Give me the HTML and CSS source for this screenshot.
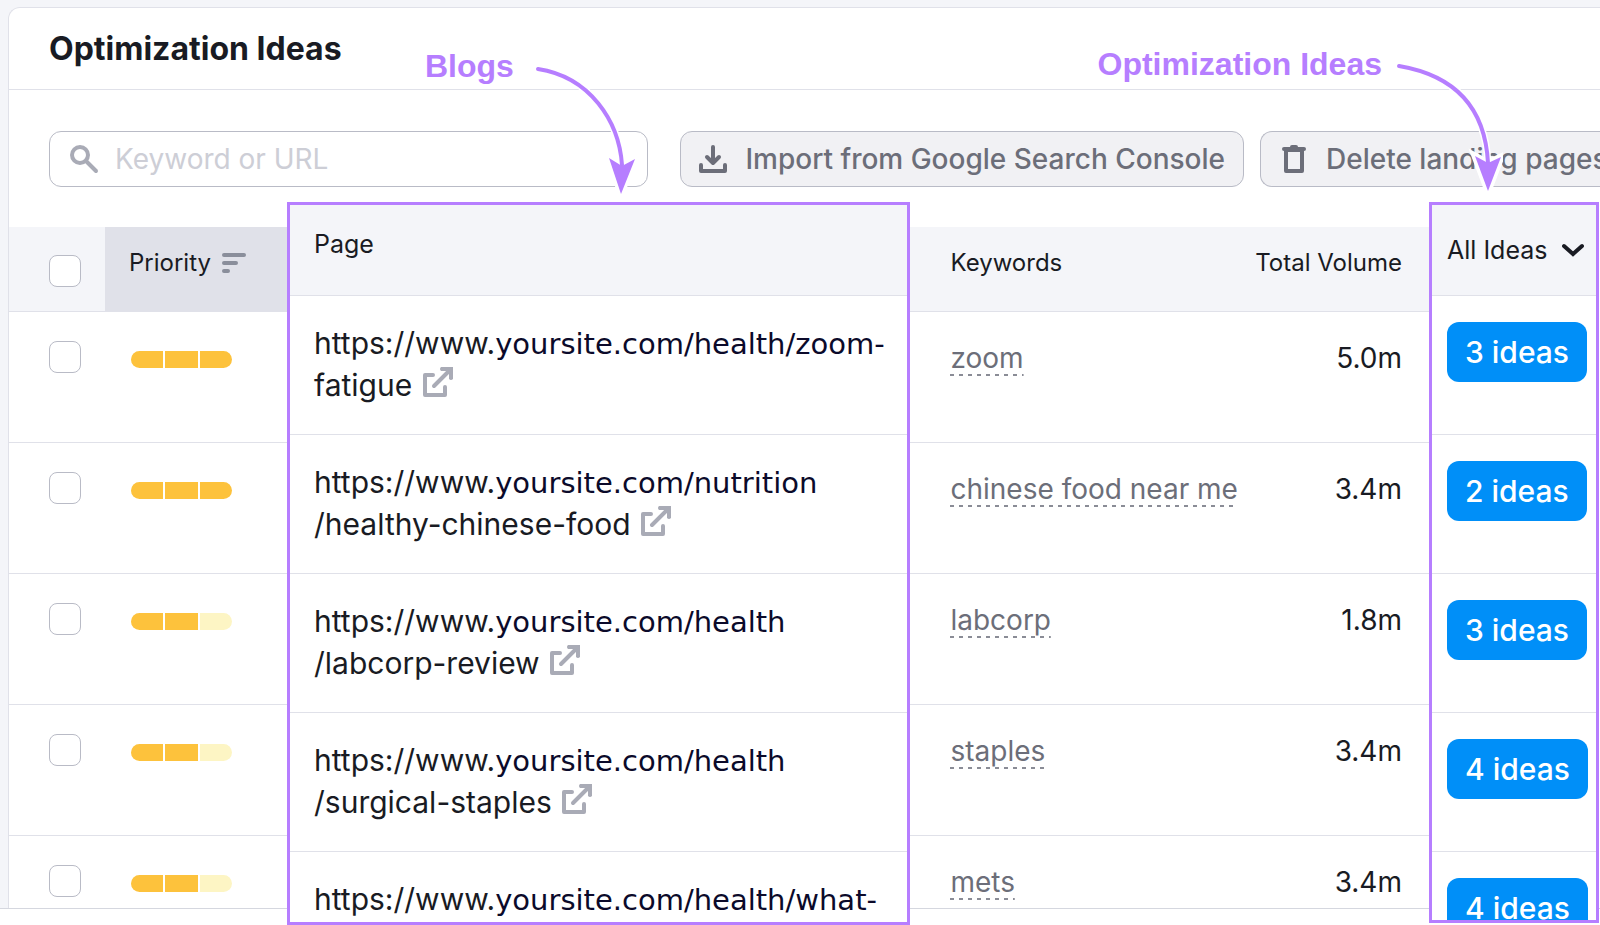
FILE: index.html
```
<!DOCTYPE html>
<html lang="en">
<head>
    <meta charset="utf-8">
    <title>Optimization Ideas</title>
    <link rel="stylesheet" href="styles.css">
</head>
<body>
<svg class="defs" width="0" height="0" aria-hidden="true">
    <symbol id="external" viewBox="0 0 30 30">
        <path d="M10 8H2v20h20v-8M11 19L27 3" fill="none" stroke="currentColor" stroke-width="4" stroke-linecap="round" stroke-linejoin="round"/>
        <path d="M18 0h12v12q-1 1-2 1t-2-1V4h-8q-1-1-1-2t1-2z" fill="currentColor"/>
    </symbol>
</svg>
<div class="backdrop">
    <main class="card">
        <header class="card-head">
            <h1>Optimization Ideas</h1>
        </header>
        <div class="toolbar">
            <label class="search">
                <svg width="30" height="30" viewBox="0 0 30 30" fill="none" stroke="currentColor" stroke-width="4" stroke-linecap="round">
                    <circle cx="11" cy="11" r="8"/>
                    <path d="M17 17l10 10"/>
                </svg>
                <input type="text" placeholder="Keyword or URL" aria-label="Keyword or URL">
            </label>
            <button class="btn" type="button">
                <svg width="28" height="28" viewBox="0 0 28 28" fill="none" stroke="currentColor" stroke-width="4" stroke-linecap="round" stroke-linejoin="round">
                    <path d="M14 2v14M8 12l6 6 6-6M2 20v6h24v-6"/>
                </svg>
                Import from Google Search Console
            </button>
            <button class="btn btn-delete" type="button">
                <svg width="24" height="28" viewBox="0 0 24 28" fill="none" stroke="currentColor" stroke-width="4" stroke-linejoin="round">
                    <path d="M4 5h16v21H4z"/>
                    <path d="M2 4h20" stroke-linecap="round"/>
                    <path d="M10 2h4" stroke-linecap="round"/>
                </svg>
                Delete landing pages
            </button>
        </div>
        <div class="board">
            <div class="pane">
                <table class="grid">
                    <thead>
                    <tr>
                        <th class="col-check"><input type="checkbox" aria-label="Select all"></th>
                        <th class="col-priority">Priority
                            <svg width="24" height="20" viewBox="0 0 24 20" stroke="currentColor" stroke-width="4" stroke-linecap="round">
                                <path d="M2 2h20M2 10h12M2 18h4"/>
                            </svg>
                        </th>
                    </tr>
                    </thead>
                    <tbody>
                    <tr><td class="col-check"><input type="checkbox" aria-label="Select zoom"></td><td><div class="bars"><i></i><i></i><i></i></div></td></tr>
                    <tr><td class="col-check"><input type="checkbox" aria-label="Select chinese food near me"></td><td><div class="bars"><i></i><i></i><i></i></div></td></tr>
                    <tr><td class="col-check"><input type="checkbox" aria-label="Select labcorp"></td><td><div class="bars"><i></i><i></i><i class="off"></i></div></td></tr>
                    <tr><td class="col-check"><input type="checkbox" aria-label="Select staples"></td><td><div class="bars"><i></i><i></i><i class="off"></i></div></td></tr>
                    <tr><td class="col-check"><input type="checkbox" aria-label="Select mets"></td><td><div class="bars"><i></i><i></i><i class="off"></i></div></td></tr>
                    </tbody>
                </table>
            </div>
            <div class="panel">
                <table class="grid pages">
                    <thead>
                    <tr><th>Page</th></tr>
                    </thead>
                    <tbody>
                    <tr><td>https://www.<span class="site">yoursite.com/health/zoom-</span><br>fatigue <a href="#" aria-label="Open page"><svg><use href="#external"/></svg></a></td></tr>
                    <tr><td>https://www.<span class="site">yoursite.com/nutrition</span><br>/healthy-chinese-food <a href="#" aria-label="Open page"><svg><use href="#external"/></svg></a></td></tr>
                    <tr><td>https://www.<span class="site">yoursite.com/health</span><br>/labcorp-review <a href="#" aria-label="Open page"><svg><use href="#external"/></svg></a></td></tr>
                    <tr><td>https://www.<span class="site">yoursite.com/health</span><br>/surgical-staples <a href="#" aria-label="Open page"><svg><use href="#external"/></svg></a></td></tr>
                    <tr><td>https://www.<span class="site">yoursite.com/health/what-</span></td></tr>
                    </tbody>
                </table>
            </div>
            <div class="pane">
                <table class="grid metrics">
                    <thead>
                    <tr><th>Keywords</th><th class="num">Total Volume</th></tr>
                    </thead>
                    <tbody>
                    <tr><td><a href="#">zoom</a></td><td class="num">5.0m</td></tr>
                    <tr><td><a href="#">chinese food near me</a></td><td class="num">3.4m</td></tr>
                    <tr><td><a href="#">labcorp</a></td><td class="num">1.8m</td></tr>
                    <tr><td><a href="#">staples</a></td><td class="num">3.4m</td></tr>
                    <tr><td><a href="#">mets</a></td><td class="num">3.4m</td></tr>
                    </tbody>
                </table>
            </div>
            <div class="panel panel-ideas">
                <table class="grid ideas">
                    <thead>
                    <tr>
                        <th>
                            <button class="filter" type="button">All Ideas
                                <svg width="22" height="14" viewBox="0 0 22 14" fill="none" stroke="currentColor" stroke-width="4" stroke-linecap="round">
                                    <path d="M2 3l9 8 9-8"/>
                                </svg>
                            </button>
                        </th>
                    </tr>
                    </thead>
                    <tbody>
                    <tr><td><button class="idea" type="button">3 ideas</button></td></tr>
                    <tr><td><button class="idea" type="button">2 ideas</button></td></tr>
                    <tr><td><button class="idea" type="button">3 ideas</button></td></tr>
                    <tr><td><button class="idea" type="button">4 ideas</button></td></tr>
                    <tr><td><button class="idea" type="button">4 ideas</button></td></tr>
                    </tbody>
                </table>
            </div>
        </div>
    </main>
</div>

<div class="note note-blogs">
    <span>Blogs</span>
    <svg width="110" height="140" viewBox="0 0 110 140">
        <path class="halo" d="M12 10C64 18 93 62 96 106M83 99l12 35 14-35-13 7z"/>
        <path class="curve" d="M12 10C64 18 93 62 96 106"/>
        <path class="head" d="M83 99l12 36 14-35-13 7z"/>
    </svg>
</div>
<div class="note note-ideas">
    <span>Optimization Ideas</span>
    <svg width="116" height="140" viewBox="0 0 116 140">
        <path class="halo" d="M12 9C65 18 98 48 101 106M88 99l13 35 13-34-13 6z"/>
        <path class="curve" d="M12 9C65 18 98 48 101 106"/>
        <path class="head" d="M88 99l13 35 13-34-13 6z"/>
    </svg>
</div>
</body>
</html>
```
FILE: styles.css
```
* {
    box-sizing: border-box;
}

body {
    position: relative;
    display: flex;
    flex-direction: column;
    height: 100vh;
    margin: 0;
    overflow: hidden;
    background: #fff;
    color: #191b23;
    font-family: Inter, "Liberation Sans", sans-serif;
    font-size: 28px;
}

button, input {
    font: inherit;
    color: inherit;
}

.defs {
    position: absolute;
}

.backdrop {
    flex: 1;
    min-height: 0;
    display: flex;
    margin-bottom: 16px;
    padding: 7px 0 0 8px;
    background: #f4f5f9;
    border-bottom: 1px solid #d5d7df;
}

.card {
    flex: 1;
    min-width: 0;
    display: flex;
    flex-direction: column;
    background: #fff;
    border: 1px solid #e0e1e9;
    border-width: 1px 0 0 1px;
    border-radius: 12px 0 0 0;
}

.card-head {
    padding: 20px 40px;
    border-bottom: 1px solid #e0e1e9;
}

h1 {
    margin: 0;
    font-size: 32px;
    line-height: 41px;
    font-weight: 700;
}

.toolbar {
    display: flex;
    gap: 16px;
    padding: 41px 0 40px 40px;
    overflow: hidden;
}

.search {
    flex: 1;
    display: flex;
    align-items: center;
    gap: 16px;
    height: 56px;
    margin-right: 16px;
    padding: 0 19px;
    border: 1px solid #b9bbc6;
    border-radius: 12px;
    color: #a9abb6;
}

.search input {
    flex: 1;
    min-width: 0;
    padding: 0;
    border: 0;
    outline: 0;
    background: none;
    color: #191b23;
}

.search input::placeholder {
    color: #cdced6;
    opacity: 1;
}

.btn {
    flex: none;
    display: flex;
    align-items: center;
    gap: 18px;
    height: 56px;
    padding: 0 18px;
    border: 1px solid #b9bbc6;
    border-radius: 12px;
    background: #f1f1f4;
    color: #6c6e79;
    font-weight: 500;
    white-space: nowrap;
}

.btn svg {
    flex: none;
}

/* runs off the right side of the card */
.btn-delete {
    justify-content: flex-start;
    gap: 20px;
    width: 341px;
    margin-right: -1px;
    padding: 0 0 0 21px;
    border-right: 0;
    border-radius: 12px 0 0 12px;
}

.board {
    flex: 1;
    min-height: 0;
    display: grid;
    grid-template-columns: 278px 624fr 519fr 170px;
    grid-template-rows: minmax(0, 1fr);
    padding-right: 1px;
}

.pane {
    overflow: hidden;
}

.panel {
    margin: -25px 0 -17px;
    border: 3px solid #b67eff;
    background: #fff;
    overflow: hidden;
}

.panel-ideas {
    margin-bottom: -15px;
}

.grid {
    width: 100%;
    border-collapse: separate;
    border-spacing: 0;
}

.grid th {
    height: 85px;
    padding: 20px 0 0;
    background: #f4f5f9;
    border-bottom: 1px solid #e0e1e9;
    font-size: 24px;
    line-height: 32px;
    font-weight: 400;
    text-align: left;
    vertical-align: top;
}

.grid td {
    height: 131px;
    padding: 28px 0 0;
    border-bottom: 1px solid #e0e1e9;
    line-height: 36px;
    vertical-align: top;
}

.grid .col-check {
    width: 96px;
    padding-top: 29px;
    padding-left: 40px;
}

.grid th.col-check {
    padding-top: 28px;
}

.grid .col-priority {
    padding-left: 24px;
    background: #e0e1e9;
}

.col-priority svg {
    margin-left: 4px;
    color: #8a8e9b;
    vertical-align: -2px;
}

input[type="checkbox"] {
    appearance: none;
    display: block;
    width: 32px;
    height: 32px;
    margin: 0;
    border: 1px solid #b9bbc6;
    border-radius: 8px;
    background: #fff;
}

.bars {
    display: flex;
    gap: 2px;
    width: 101px;
    margin: 11px 0 0 26px;
    border-radius: 9px;
    overflow: hidden;
}

.bars i {
    flex: 1;
    height: 17px;
    background: #fdc23c;
}

.bars .off {
    background: #fdf5c4;
}

.panel th {
    height: 91px;
    padding: 23px 24px 0;
    font-size: 25px;
}

.panel td {
    height: 139px;
    padding: 26px 0 0 24px;
    font-size: 30px;
}

.grid.pages td {
    line-height: 42px;
    white-space: nowrap;
}

.site {
    font-family: "DejaVu Sans", sans-serif;
    font-size: 29px;
    line-height: 1;
    color: #0b0a2a;
}

.pages a {
    margin-left: 2px;
    color: #a9abb6;
}

.pages svg {
    width: 30px;
    height: 30px;
    vertical-align: -1px;
}

.metrics th:first-child,
.metrics td:first-child {
    padding-left: 40px;
}

.grid .num {
    padding-right: 27px;
    text-align: right;
}

.metrics a {
    display: inline-block;
    padding-bottom: 1px;
    background: repeating-linear-gradient(90deg, #8a8c96 0 4px, transparent 4px 9px) bottom / 100% 2px no-repeat;
    color: #6c6e79;
    line-height: 34px;
    text-decoration: none;
}

.grid.ideas th,
.grid.ideas td {
    padding-left: 15px;
    padding-right: 0;
}

.filter {
    display: flex;
    align-items: center;
    gap: 15px;
    padding: 6px 0 0;
    border: 0;
    background: none;
    line-height: 32px;
    white-space: nowrap;
}

.idea {
    display: block;
    height: 60px;
    padding: 0 18px;
    border: 0;
    border-radius: 12px;
    background: #008ff8;
    color: #fff;
    font-weight: 500;
    white-space: nowrap;
}

/* callouts drawn over the card */
.note {
    position: absolute;
    display: flex;
    gap: 12px;
    color: #b67eff;
    font: bold 32px/36px "Liberation Sans", Arial, sans-serif;
    white-space: nowrap;
    pointer-events: none;
}

.note-blogs {
    top: 48px;
    left: 425px;
}

.note-ideas {
    top: 46px;
    right: 97px;
    gap: 5px;
}

.note svg {
    flex: none;
    margin-top: 11px;
}

.note .curve {
    fill: none;
    stroke: currentColor;
    stroke-width: 4;
    stroke-linecap: round;
}

.note .head {
    fill: currentColor;
}

.note .halo {
    fill: none;
    stroke: #fff;
    stroke-width: 7;
}
```
